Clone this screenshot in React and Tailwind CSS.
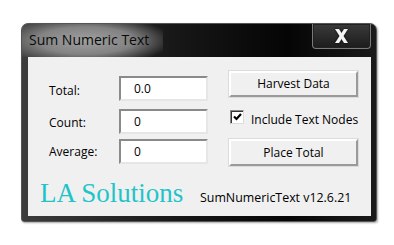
import React from "react";

const ui = { fontFamily: '"Open Sans", "Noto Sans", sans-serif' };

function Field({ value }) {
  return (
    <div className="w-[89px] h-[25px] bg-white border-2 border-t-[#8a8a8a] border-l-[#8a8a8a] border-r-[#e6e6e6] border-b-[#e6e6e6] flex items-center pl-[13px] text-[12px] leading-[16px] text-black">
      {value}
    </div>
  );
}

function Button({ children, h }) {
  return (
    <div
      className={`w-[129px] ${h} bg-[#f0f0f0] border-2 border-t-white border-l-white border-r-[#9a9a9a] border-b-[#9a9a9a] shadow-[0_0_0_1px_#dcdcdc] flex items-center justify-center text-[12px] leading-[16px] text-black`}
    >
      {children}
    </div>
  );
}

export default function App() {
  return (
    <div className="w-[394px] h-[245px] bg-white pt-[23px] pl-[21px]" style={ui}>
      <div className="w-[356px] h-[199px] flex flex-col rounded-t-[7px] rounded-b-[3px] border border-[#555] bg-[linear-gradient(to_right,#3c3c3c,#161616_45%,#050505_75%,#1a1a1a)] shadow-[1px_1px_2px_rgba(0,0,0,0.35)]">
        {/* title bar */}
        <div className="h-[33px] flex items-start">
          <div className="h-[33px] pl-[7px] pr-[14px] bg-[radial-gradient(ellipse_62%_75%_at_45%_50%,rgba(160,160,160,1),rgba(140,140,140,0.9)_55%,rgba(90,90,90,0))]">
            <div className="pt-[6px] text-[14px] leading-[19px] text-[#0a0a0a]">Sum Numeric Text</div>
          </div>
          <div className="ml-auto mr-[5px] w-[59px] h-[25px] rounded-b-[4px] border border-t-0 border-[#7a7a7a] shadow-[inset_0_0_0_1px_#222] bg-[linear-gradient(to_bottom,#3a3a3a,#1c1c1c)] flex items-center justify-center">
            <svg width="15" height="14" viewBox="0 0 15 14" className="drop-shadow-[0_0_1px_rgba(0,0,0,0.9)]">
              <polygon points="1,0 5,0 14,14 10,14" fill="#f4f4f4" />
              <polygon points="10,0 14,0 5,14 1,14" fill="#f4f4f4" />
            </svg>
          </div>
        </div>
        {/* client area */}
        <div className="flex-1 ml-[6px] mr-[5px] mb-[5px] bg-[#f0f0f0] flex flex-col">
          <div className="flex">
            <div className="ml-[21px] flex flex-col">
              <div className="mt-[19px] flex items-center">
                <div className="w-[70px] pt-[5px] text-[12px] leading-[16px] text-black">Total:</div>
                <Field value="0.0" />
              </div>
              <div className="mt-[8px] flex items-center">
                <div className="w-[70px] pt-[3px] text-[12px] leading-[16px] text-black">Count:</div>
                <Field value="0" />
              </div>
              <div className="mt-[5px] flex items-center">
                <div className="w-[70px] text-[12px] leading-[16px] text-black">Average:</div>
                <Field value="0" />
              </div>
            </div>
            <div className="ml-[21px] flex flex-col">
              <div className="mt-[14px]">
                <Button h="h-[26px]">Harvest Data</Button>
              </div>
              <div className="mt-[13px] h-[16px] flex items-start">
                <div className="ml-[1px] w-[14px] h-[14px] bg-white border border-t-[#8a8a8a] border-l-[#8a8a8a] border-r-[#dcdcdc] border-b-[#dcdcdc] shadow-[inset_1px_1px_0_#333] flex items-center justify-center">
                  <svg width="9" height="8" viewBox="0 0 9 8">
                    <path d="M1 3.5 L3.5 6 L8 1" stroke="#000" strokeWidth="2.2" fill="none" />
                  </svg>
                </div>
                <div className="ml-[7px] mt-[2px] text-[12px] leading-[16px] text-black">Include Text Nodes</div>
              </div>
              <div className="mt-[13px]">
                <Button h="h-[27px]">Place Total</Button>
              </div>
            </div>
          </div>
          <div className="mt-[12px] flex items-baseline">
            <div
              className="ml-[12px] w-[160px] text-[27px] leading-[31px] text-[#1fc4c9]"
              style={{ fontFamily: '"Liberation Serif", serif' }}
            >
              LA Solutions
            </div>
            <div className="text-[12.4px] leading-[16px] text-black">SumNumericText v12.6.21</div>
          </div>
        </div>
      </div>
    </div>
  );
}
